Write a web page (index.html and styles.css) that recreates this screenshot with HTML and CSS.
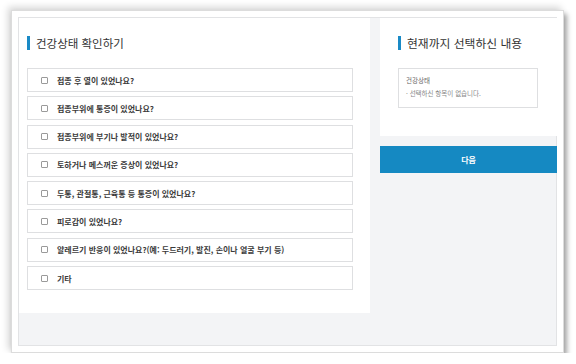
FILE: index.html
```html
<!DOCTYPE html>
<html lang="ko">
<head>
<meta charset="utf-8">
<link rel="stylesheet" href="styles.css">
</head>
<body>
<div class="frame">
  <div class="inner">
    <section class="left">
      <h2 class="title">건강상태 확인하기</h2>
      <ul class="items">
        <li class="item"><span class="cb"></span>접종 후 열이 있었나요?</li>
        <li class="item"><span class="cb"></span>접종부위에 통증이 있었나요?</li>
        <li class="item"><span class="cb"></span>접종부위에 부기나 발적이 있었나요?</li>
        <li class="item"><span class="cb"></span>토하거나 메스꺼운 증상이 있었나요?</li>
        <li class="item"><span class="cb"></span>두통, 관절통, 근육통 등 통증이 있었나요?</li>
        <li class="item"><span class="cb"></span>피로감이 있었나요?</li>
        <li class="item"><span class="cb"></span>알레르기 반응이 있었나요?(예: 두드러기, 발진, 손이나 얼굴 부기 등)</li>
        <li class="item"><span class="cb"></span>기타</li>
      </ul>
    </section>
    <aside class="right">
      <div class="summary">
        <h2 class="title title-r">현재까지 선택하신 내용</h2>
        <div class="sel">
          <p class="sel-head">건강상태</p>
          <p class="sel-text">· 선택하신 항목이 없습니다.</p>
        </div>
      </div>
      <button class="next">다음</button>
    </aside>
  </div>
</div>
</body>
</html>
```
FILE: styles.css
```css
* { box-sizing: border-box; }
html, body { margin: 0; padding: 0; background: #fff; }
body {
  font-family: "Noto Sans CJK KR", "Noto Sans", sans-serif;
  color: #333;
  padding: 10px 0 0 11px;
}
.frame {
  width: 553px;
  height: 343px;
  background: #fff;
  border: 1px solid #dcdcdc;
  padding: 6px;
  box-shadow: 3px 4px 5px rgba(0,0,0,0.35), -3px -3px 7px rgba(0,0,0,0.16);
}
.inner {
  width: 539px;
  height: 329px;
  border: 1px solid #e2e3e5;
  background: #f3f4f6;
  display: grid;
  grid-template-columns: 351px 177px;
  column-gap: 10px;
  align-items: start;
}
.left {
  background: #fff;
  padding: 18px 17px 23px 8px;
}
.title {
  margin: 0;
  height: 14px;
  border-left: 3px solid #1a8ac6;
  padding-left: 6px;
  font-size: 11.5px;
  font-weight: 400;
  line-height: 14px;
  color: #333;
}
.items {
  list-style: none;
  margin: 18px 0 0;
  padding: 0;
  display: flex;
  flex-direction: column;
  gap: 4.3px;
}
.item {
  height: 24px;
  border: 1px solid #dedfe1;
  background: #fff;
  display: flex;
  align-items: center;
  padding-left: 13px;
  font-size: 8px;
  font-weight: 700;
  color: #3a3a3a;
}
.cb {
  width: 7px;
  height: 7px;
  border: 1px solid #9a9a9a;
  border-radius: 1px;
  margin-right: 9px;
  flex: none;
}
.right {
  display: flex;
  flex-direction: column;
}
.summary {
  background: #fff;
  padding: 18px 19px 28px 18px;
}
.title-r { font-size: 11.8px; }
.sel {
  margin-top: 18px;
  height: 40px;
  border: 1px solid #dedfe1;
  padding: 6px 7px;
}
.sel p {
  margin: 0;
  font-size: 6.5px;
  line-height: 10px;
  color: #666;
}
.sel .sel-text { margin-top: 3px; color: #888; }
.next {
  margin-top: 10px;
  height: 27px;
  border: none;
  background: #1589c2;
  color: #fff;
  font-family: inherit;
  font-size: 8px;
  font-weight: 700;
  padding: 0;
}
```
